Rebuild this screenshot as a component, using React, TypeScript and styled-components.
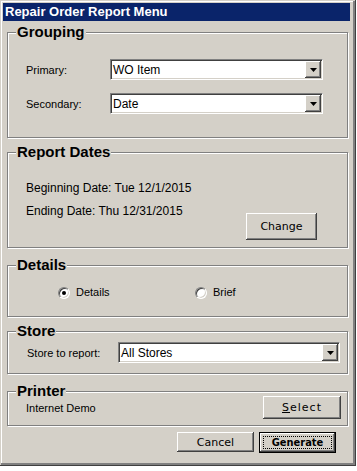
import styled, { createGlobalStyle } from 'styled-components'

const Global = createGlobalStyle`
  html, body { margin: 0; padding: 0; background: #ffffff; }
  body { font-family: "Liberation Sans", Arial, sans-serif; font-size: 11px; color: #000; }
`

const raised = `
  box-shadow: inset -1px -1px #404040, inset 1px 1px #ffffff, inset -2px -2px #808080, inset 2px 2px #d4d0c8;
`

const Window = styled.div`
  box-sizing: border-box;
  width: 356px;
  height: 466px;
  padding: 3px 6px 3px 3px;
  background: #d4d0c8;
  box-shadow: inset -1px -1px #404040, inset 1px 1px #d4d0c8, inset -3px -3px #808080, inset 2px 2px #ffffff;
  display: flex;
  flex-direction: column;
`

const TitleBar = styled.div`
  height: 18px;
  line-height: 18px;
  padding-left: 2px;
  background: #0a246a;
  color: #ffffff;
  font-weight: bold;
  font-size: 13px;
  white-space: nowrap;
`

const Body = styled.div`
  display: flex;
  flex-direction: column;
  padding: 0 2px 0 4px;
`

const Group = styled.div<{ $h: number; $top: number }>`
  position: relative;
  box-sizing: border-box;
  height: ${p => p.$h}px;
  margin-top: ${p => p.$top}px;
  border: 1px solid #808080;
  box-shadow: inset 1px 1px #ffffff, 1px 1px #ffffff;
`

const Legend = styled.div`
  position: absolute;
  top: -9px;
  left: 8px;
  padding: 0 1px;
  background: #d4d0c8;
  font-weight: bold;
  font-size: 15px;
  line-height: 16px;
`

const GroupBody = styled.div<{ $pt: number; $pl?: number; $pr?: number }>`
  display: flex;
  flex-direction: column;
  padding: ${p => p.$pt}px ${p => p.$pr ?? 0}px 0 ${p => p.$pl ?? 18}px;
`

const Row = styled.div<{ $mt?: number }>`
  display: flex;
  align-items: center;
  margin-top: ${p => p.$mt ?? 0}px;
`

const Label = styled.span<{ $w?: number }>`
  width: ${p => (p.$w ? `${p.$w}px` : 'auto')};
  flex: none;
  font-size: 11px;
`

const Combo = styled.div<{ $w: number }>`
  box-sizing: border-box;
  width: ${p => p.$w}px;
  height: 21px;
  display: flex;
  align-items: center;
  padding-left: 2px;
  background: #ffffff;
  border: 1px solid;
  border-color: #808080 #ffffff #ffffff #808080;
  box-shadow: inset 1px 1px #404040, inset -1px -1px #d4d0c8;
  font-size: 12px;
`

const DropBtn = styled.div`
  margin-left: auto;
  margin-right: 1px;
  width: 16px;
  height: 17px;
  display: flex;
  align-items: center;
  justify-content: center;
  background: #d4d0c8;
  ${raised}
`

const DateLine = styled.div<{ $mt?: number }>`
  font-size: 12px;
  line-height: 14px;
  margin-top: ${p => p.$mt ?? 0}px;
`

const ButtonRow = styled.div<{ $mt?: number; $pr?: number; $gap?: number }>`
  display: flex;
  justify-content: flex-end;
  gap: ${p => p.$gap ?? 0}px;
  margin-top: ${p => p.$mt ?? 0}px;
  margin-left: auto;
  padding-right: ${p => p.$pr ?? 0}px;
`

const Button = styled.button<{ $w: number; $h: number; $default?: boolean; $spacing?: number }>`
  position: relative;
  box-sizing: border-box;
  width: ${p => p.$w}px;
  height: ${p => p.$h}px;
  padding: 0;
  margin: 0;
  border: ${p => (p.$default ? '1px solid #000000' : 'none')};
  background: #d4d0c8;
  ${raised}
  font-family: "DejaVu Sans", Verdana, sans-serif;
  font-stretch: ${p => (p.$default ? 'condensed' : 'normal')};
  font-size: 11px;
  font-weight: ${p => (p.$default ? 'bold' : 'normal')};
  letter-spacing: ${p => p.$spacing ?? 0}px;
  color: #000;
  &::after {
    content: '';
    display: ${p => (p.$default ? 'block' : 'none')};
    position: absolute;
    inset: 3px;
    border: 1px dotted #000000;
  }
`

const Options = styled.div`
  display: grid;
  grid-template-columns: 137px auto;
  padding-left: 50px;
`

const Option = styled.label`
  display: flex;
  align-items: center;
  gap: 6px;
  font-size: 11px;
  line-height: 13px;
`

const Radio = styled.span<{ $on?: boolean }>`
  box-sizing: border-box;
  width: 12px;
  height: 12px;
  border-radius: 50%;
  background: #ffffff;
  border: 1px solid;
  border-color: #808080 #ffffff #ffffff #808080;
  box-shadow: inset 1px 1px #404040, inset -1px -1px #d4d0c8;
  display: flex;
  align-items: center;
  justify-content: center;
  &::after {
    content: '';
    display: ${p => (p.$on ? 'block' : 'none')};
    width: 4px;
    height: 4px;
    border-radius: 50%;
    background: #000000;
  }
`

const Arrow = () => (
  <svg width="7" height="4" viewBox="0 0 7 4">
    <polygon points="0,0 7,0 3.5,4" fill="#000" />
  </svg>
)

const Select = ({ value, width }: { value: string; width: number }) => (
  <Combo $w={width}>
    {value}
    <DropBtn>
      <Arrow />
    </DropBtn>
  </Combo>
)

export default function App() {
  return (
    <>
      <Global />
      <Window>
        <TitleBar>Repair Order Report Menu</TitleBar>
        <Body>
          <Group $h={106} $top={11}>
            <Legend>Grouping</Legend>
            <GroupBody $pt={26}>
              <Row>
                <Label $w={84}>Primary:</Label>
                <Select value="WO Item" width={213} />
              </Row>
              <Row $mt={13}>
                <Label $w={84}>Secondary:</Label>
                <Select value="Date" width={213} />
              </Row>
            </GroupBody>
          </Group>

          <Group $h={96} $top={14}>
            <Legend>Report Dates</Legend>
            <GroupBody $pt={28} $pr={30}>
              <DateLine>Beginning Date: Tue 12/1/2015</DateLine>
              <DateLine $mt={9}>Ending Date: Thu 12/31/2015</DateLine>
              <ButtonRow $mt={-5}>
                <Button $w={71} $h={27}>Change</Button>
              </ButtonRow>
            </GroupBody>
          </Group>

          <Group $h={52} $top={17}>
            <Legend>Details</Legend>
            <GroupBody $pt={20} $pl={0}>
              <Options>
                <Option>
                  <Radio $on />
                  Details
                </Option>
                <Option>
                  <Radio />
                  Brief
                </Option>
              </Options>
            </GroupBody>
          </Group>

          <Group $h={43} $top={14}>
            <Legend>Store</Legend>
            <GroupBody $pt={10} $pl={19}>
              <Row>
                <Label $w={91}>Store to report:</Label>
                <Select value="All Stores" width={222} />
              </Row>
            </GroupBody>
          </Group>

          <Group $h={35} $top={17}>
            <Legend>Printer</Legend>
            <GroupBody $pt={4} $pr={6}>
              <Row>
                <Label>Internet Demo</Label>
                <ButtonRow>
                  <Button $w={78} $h={23} $spacing={1}>
                    <u>S</u>elect
                  </Button>
                </ButtonRow>
              </Row>
            </GroupBody>
          </Group>

          <ButtonRow $mt={6} $pr={12} $gap={5}>
            <Button $w={77} $h={20}>Cancel</Button>
            <Button $w={77} $h={21} $default>Generate</Button>
          </ButtonRow>
        </Body>
      </Window>
    </>
  )
}
